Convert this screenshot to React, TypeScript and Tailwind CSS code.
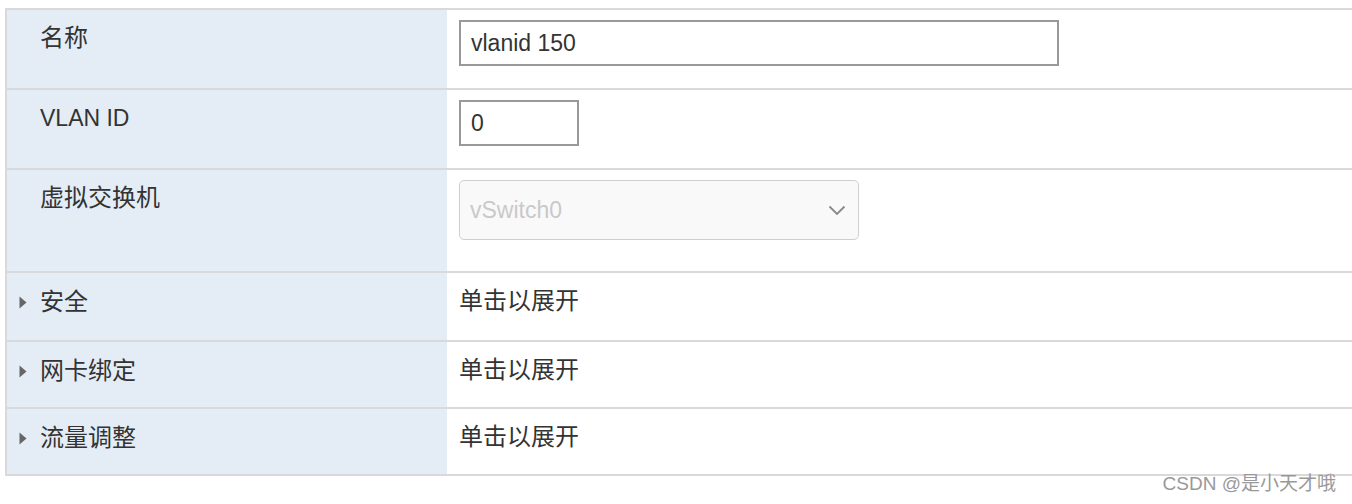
const font = { fontFamily: '"Liberation Sans", "Noto Sans CJK SC", sans-serif' };

function Row({
  label,
  expandable,
  h,
  children,
}: {
  label: string;
  expandable?: boolean;
  h: string;
  children: React.ReactNode;
}) {
  const size = /^[\x00-\x7f]+$/.test(label) ? "text-[23px]" : "text-[24px]";
  return (
    <div className={`flex border-b-2 border-[#d9d9d9] ${h}`}>
      <div className="w-[440px] shrink-0 bg-[#e4edf6] flex items-start">
        {expandable ? (
          <div className="flex items-center pl-[12px] pt-[14px] gap-[13px]">
            <svg width="8" height="13" viewBox="0 0 8 13" className="shrink-0">
              <path d="M0.5 0.5 L7.5 6.5 L0.5 12.5 Z" fill="#666" />
            </svg>
            <span className={`${size} leading-[30px] text-[#333]`}>{label}</span>
          </div>
        ) : (
          <span className={`pl-[33px] pt-[13px] ${size} leading-[30px] text-[#333]`}>{label}</span>
        )}
      </div>
      <div className="flex-1 bg-white">{children}</div>
    </div>
  );
}

export default function App() {
  return (
    <div className="relative w-[1352px] h-[504px] bg-white pt-[8px] pl-[5px]" style={font}>
      <div className="border-t-2 border-l-2 border-[#d9d9d9]">
        <Row label="名称" h="h-[80px]">
          <div className="pl-[12px] pt-[10px]">
            <div className="w-[600px] h-[46px] border-2 border-[#999] flex items-center pl-[10px] text-[23px] text-[#333]">
              vlanid 150
            </div>
          </div>
        </Row>
        <Row label="VLAN ID" h="h-[80px]">
          <div className="pl-[12px] pt-[10px]">
            <div className="w-[120px] h-[46px] border-2 border-[#999] flex items-center pl-[10px] text-[23px] text-[#333]">
              0
            </div>
          </div>
        </Row>
        <Row label="虚拟交换机" h="h-[103px]">
          <div className="pl-[12px] pt-[10px]">
            <div className="w-[400px] h-[60px] rounded-[5px] border-[1.5px] border-[#cfcfcf] bg-[#f9f9f9] flex items-center justify-between pl-[10px] pr-[12px]">
              <span className="text-[23px] text-[#c9c9c9]">vSwitch0</span>
              <svg width="18" height="11" viewBox="0 0 18 11">
                <path d="M1.5 1.5 L9 9 L16.5 1.5" fill="none" stroke="#888" strokeWidth="1.8" />
              </svg>
            </div>
          </div>
        </Row>
        {["安全", "网卡绑定", "流量调整"].map((l, i) => (
          <Row key={l} label={l} expandable h={i === 0 ? "h-[69px]" : "h-[67px]"}>
            <div className="pl-[12px] pt-[13px] text-[24px] leading-[30px] text-[#333]">单击以展开</div>
          </Row>
        ))}
      </div>
      <div className="absolute right-[16px] top-[472px] text-[19px] leading-[24px] text-[#999]">
        CSDN @是小天才哦
      </div>
    </div>
  );
}
